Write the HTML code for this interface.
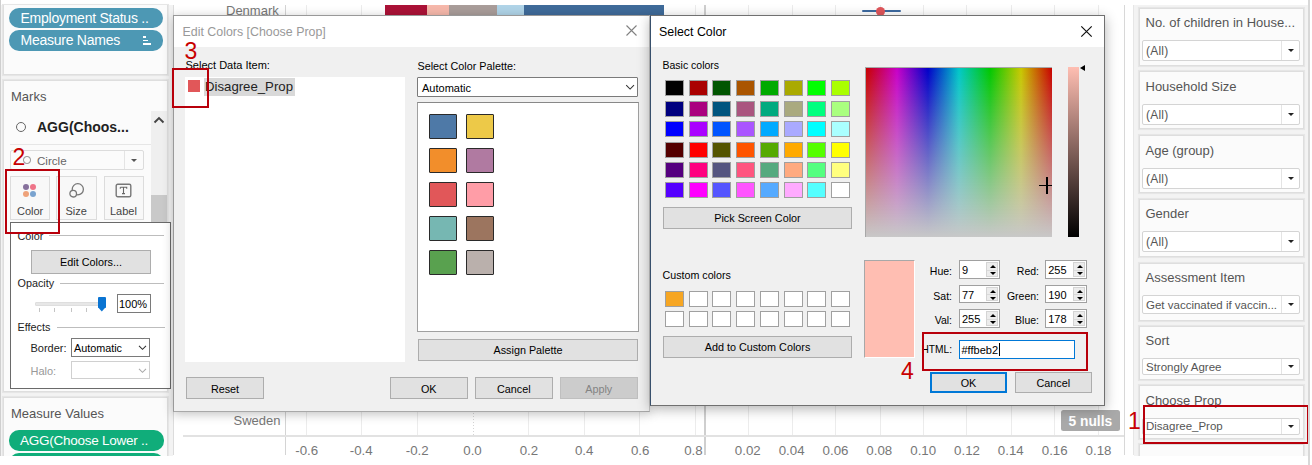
<!DOCTYPE html>
<html><head><meta charset="utf-8">
<style>
*{margin:0;padding:0;box-sizing:border-box}
html,body{width:1312px;height:465px;overflow:hidden;background:#fff;font-family:"Liberation Sans",sans-serif}
.a{position:absolute}
.t{position:absolute;white-space:pre;line-height:1}
.card{position:absolute;background:#fbfbfb;border:1px solid #dedede;box-shadow:0 0 0.6px 0.6px #e6e6e6}
.pill{position:absolute;border-radius:10px;color:#fff;font-size:14px;letter-spacing:-0.25px;white-space:pre}
.btn{position:absolute;background:#e1e1e1;border:1px solid #adadad;font-size:10.8px;color:#000;text-align:center;white-space:pre}
.sw{position:absolute;width:19px;height:16px;border:1px solid #a0a0a0}
.psw{position:absolute;width:28px;height:25px;border:1px solid #2a2a2a;border-radius:1px}
.fcard{position:absolute;left:1139px;width:165px;background:#fbfbfb;border:1px solid #dedede;box-shadow:0 0 0.6px 0.6px #e6e6e6}
.fdd{position:absolute;left:2px;width:158px;background:#fff;border:1px solid #d4d4d4;border-radius:2px}
.fdd .arr{position:absolute;right:0;top:0;bottom:0;width:18px;border-left:1px solid #e4e4e4}
.fdd .arr:after{content:"";position:absolute;left:5.5px;top:50%;margin-top:-1.5px;border-left:3px solid transparent;border-right:3px solid transparent;border-top:3.5px solid #222}
.ftitle{position:absolute;left:5.5px;font-size:13px;color:#555;white-space:pre;line-height:1}
.fval{position:absolute;left:3px;font-size:12px;color:#555;letter-spacing:0.2px;white-space:pre;line-height:1}
.spin{position:absolute;width:41px;height:18.5px;background:#fff;border:1px solid #a0a0a0}
.spin .sb{position:absolute;right:1px;top:1px;width:12px;height:14.5px;background:#ececec;border:1px solid #d4d4d4}
.lbl{position:absolute;font-size:10.5px;color:#000;white-space:pre;line-height:1;text-align:right}
.red{position:absolute;border:2px solid #b8000b}
.num{position:absolute;color:#c80000;font-size:23px;line-height:1;white-space:pre}
</style></head><body>

<!-- ============ LEFT PANEL ============ -->
<div class="a" style="left:0;top:5px;width:173px;height:451px;background:#f3f3f3"></div>
<div class="a" style="left:1134px;top:5px;width:174px;height:451px;background:#f3f3f3"></div>
<div class="a" style="left:0;top:0;width:1px;height:465px;background:#cfcfcf"></div>
<div class="card" style="left:3px;top:5px;width:165px;height:70px;border-top:none"></div>
<div class="pill" style="left:9px;top:7.8px;width:154.3px;height:20.2px;background:#4d98b4"><span class="t" style="left:11.5px;top:3px">Employment Status ..</span></div>
<div class="pill" style="left:9px;top:30.2px;width:154.3px;height:20.5px;background:#4d98b4"><span class="t" style="left:11.5px;top:3px">Measure Names</span>
 <div class="a" style="left:134px;top:6px;width:2.5px;height:1.6px;background:#fff"></div>
 <div class="a" style="left:134px;top:9.7px;width:5px;height:1.6px;background:#fff"></div>
 <div class="a" style="left:134px;top:12.9px;width:8.3px;height:1.7px;background:#fff"></div>
</div>

<!-- marks card -->
<div class="card" style="left:3px;top:80px;width:165px;height:312px"></div>
<div class="t" style="left:11px;top:90px;font-size:13px;color:#555">Marks</div>
<div class="a" style="left:15.5px;top:122px;width:10px;height:10px;border:1.3px solid #666;border-radius:50%"></div>
<div class="t" style="left:37px;top:120px;font-size:14px;font-weight:bold;color:#222">AGG(Choos...</div>
<div class="a" style="left:151px;top:111px;width:16px;height:277px;background:#efefef"></div>
<div class="a" style="left:151px;top:195px;width:16px;height:193px;background:#c9c9c9"></div>
<svg class="a" style="left:152px;top:115px" width="14" height="10"><path d="M2.5 7.5L7 3L11.5 7.5" fill="none" stroke="#444" stroke-width="1.9"/></svg>
<div class="a" style="left:10px;top:144px;width:141px;height:1px;background:#e6e6e6"></div>
<div class="a" style="left:10px;top:150px;width:134px;height:20px;background:#fbfbfb;border:1px solid #dcdcdc;border-radius:2px"></div>
<div class="a" style="left:124px;top:151px;width:1px;height:18px;background:#e4e4e4"></div>
<div class="a" style="left:131px;top:158.5px;border-left:3px solid transparent;border-right:3px solid transparent;border-top:3.5px solid #555"></div>
<div class="a" style="left:23px;top:156px;width:7.5px;height:7.5px;border:1px solid #888;border-radius:50%"></div>
<div class="t" style="left:37px;top:154.5px;font-size:11.6px;color:#666">Circle</div>

<div class="a" style="left:10.3px;top:176px;width:39.7px;height:44px;background:#f8f8f8;border:1px solid #dcdcdc"></div>
<div class="a" style="left:56.2px;top:176px;width:41.3px;height:44px;background:#f8f8f8;border:1px solid #dcdcdc"></div>
<div class="a" style="left:104px;top:176px;width:40px;height:44px;background:#f8f8f8;border:1px solid #dcdcdc"></div>
<div class="a" style="left:22.9px;top:183.8px;width:6px;height:6px;border-radius:50%;background:#86709c"></div>
<div class="a" style="left:30.3px;top:183.8px;width:6px;height:6px;border-radius:50%;background:#ee7488"></div>
<div class="a" style="left:22.9px;top:191px;width:6px;height:6px;border-radius:50%;background:#eea27a"></div>
<div class="a" style="left:30.3px;top:191px;width:6px;height:6px;border-radius:50%;background:#7aa3cf"></div>
<div class="t" style="left:17px;top:206px;font-size:11px;color:#444">Color</div>
<svg class="a" style="left:68px;top:181px" width="18" height="18"><circle cx="9.8" cy="8.3" r="5.6" fill="none" stroke="#777" stroke-width="1.3"/><circle cx="5.2" cy="12.7" r="3.3" fill="#f8f8f8" stroke="#777" stroke-width="1.3"/></svg>
<div class="t" style="left:65.5px;top:206px;font-size:11px;color:#444">Size</div>
<svg class="a" style="left:115px;top:183px" width="18" height="16"><rect x="1.2" y="1.2" width="14.6" height="12.6" rx="1.5" fill="none" stroke="#777" stroke-width="1.4"/><path d="M5.3 4.3H11.7V5.8M5.3 4.3V5.8M8.5 4.3V10.6M7 10.6H10" fill="none" stroke="#666" stroke-width="1.1"/></svg>
<div class="t" style="left:110px;top:206px;font-size:11px;color:#444">Label</div>

<!-- color popup -->
<div class="a" style="left:10px;top:222px;width:161px;height:167px;background:#fff;border:1px solid #6a6a6a"></div>
<div class="t" style="left:17.5px;top:231px;font-size:10.8px;color:#222">Color</div>
<div class="a" style="left:49px;top:235px;width:115px;height:1px;background:#bdbdbd"></div>
<div class="btn" style="left:31px;top:250px;width:120px;height:24px;padding-top:5px">Edit Colors...</div>
<div class="t" style="left:17.5px;top:278px;font-size:10.8px;color:#222">Opacity</div>
<div class="a" style="left:60px;top:283px;width:104px;height:1px;background:#bdbdbd"></div>
<div class="a" style="left:35px;top:302.3px;width:66px;height:3.5px;background:#e7e7e7;border:1px solid #dedede;border-radius:1px"></div>
<div class="a" style="left:39.2px;top:308.3px;width:1px;height:3.5px;background:#c4c4c4"></div>
<div class="a" style="left:54.3px;top:308.3px;width:1px;height:3.5px;background:#c4c4c4"></div>
<div class="a" style="left:70.5px;top:308.3px;width:1px;height:3.5px;background:#c4c4c4"></div>
<div class="a" style="left:86px;top:308.3px;width:1px;height:3.5px;background:#c4c4c4"></div>
<div class="a" style="left:97.8px;top:297.1px;width:8px;height:10.5px;background:#0a74d2;border-radius:1px"></div>
<div class="a" style="left:97.8px;top:307px;width:8px;height:4.5px;background:#0a74d2;clip-path:polygon(0 0,100% 0,50% 100%)"></div>
<div class="a" style="left:116.7px;top:294.2px;width:34px;height:18.4px;background:#fff;border:1px solid #7a7a7a"></div>
<div class="t" style="left:119px;top:298.5px;font-size:11px;color:#000">100%</div>
<div class="t" style="left:17.5px;top:322px;font-size:10.8px;color:#222">Effects</div>
<div class="a" style="left:56.5px;top:327px;width:108px;height:1px;background:#bdbdbd"></div>
<div class="t" style="left:30.5px;top:343px;font-size:11px;color:#222">Border:</div>
<div class="a" style="left:70.8px;top:338.2px;width:79.5px;height:18.4px;background:#fff;border:1px solid #7a7a7a"></div>
<div class="t" style="left:74px;top:343px;font-size:10.8px;color:#000">Automatic</div>
<svg class="a" style="left:138px;top:344px" width="10" height="8"><path d="M1 1.8L4.5 5.3L8 1.8" fill="none" stroke="#333" stroke-width="1.05"/></svg>
<div class="t" style="left:30.5px;top:365.5px;font-size:11px;color:#999">Halo:</div>
<div class="a" style="left:70.8px;top:361.2px;width:79.5px;height:18.2px;background:#fff;border:1px solid #d0d0d0"></div>
<svg class="a" style="left:138px;top:367px" width="10" height="8"><path d="M1 1.8L4.5 5.3L8 1.8" fill="none" stroke="#aaa" stroke-width="1.05"/></svg>

<!-- measure values card -->
<div class="card" style="left:3px;top:397px;width:165px;height:70px"></div>
<div class="t" style="left:11px;top:406.7px;font-size:13px;color:#555">Measure Values</div>
<div class="pill" style="left:9px;top:430.3px;width:154.5px;height:20.3px;background:#10ad7a"><span class="t" style="left:11px;top:3.6px;font-size:13.5px">AGG(Choose Lower ..</span></div>
<div class="pill" style="left:9px;top:453px;width:154.5px;height:20px;background:#10ad7a"></div>

<div class="red" style="left:5px;top:169px;width:55px;height:65px"></div>
<div class="num" style="left:12.5px;top:145.5px">2</div>

<!-- ============ CHART ============ -->
<div class="a" style="left:173px;top:5px;width:1px;height:450px;background:#dcdcdc"></div>
<div class="a" style="left:305.8px;top:5px;width:1px;height:431px;background:#ececec"></div>
<div class="a" style="left:361.0px;top:5px;width:1px;height:431px;background:#ececec"></div>
<div class="a" style="left:416.5px;top:5px;width:1px;height:431px;background:#ececec"></div>
<div class="a" style="left:527.5px;top:5px;width:1px;height:431px;background:#ececec"></div>
<div class="a" style="left:583.5px;top:5px;width:1px;height:431px;background:#ececec"></div>
<div class="a" style="left:639.0px;top:5px;width:1px;height:431px;background:#ececec"></div>
<div class="a" style="left:694.5px;top:5px;width:1px;height:431px;background:#ececec"></div>
<div class="a" style="left:748.1px;top:5px;width:1px;height:431px;background:#ececec"></div>
<div class="a" style="left:792.1px;top:5px;width:1px;height:431px;background:#ececec"></div>
<div class="a" style="left:835.1px;top:5px;width:1px;height:431px;background:#ececec"></div>
<div class="a" style="left:879.7px;top:5px;width:1px;height:431px;background:#ececec"></div>
<div class="a" style="left:923.0px;top:5px;width:1px;height:431px;background:#ececec"></div>
<div class="a" style="left:966.1px;top:5px;width:1px;height:431px;background:#ececec"></div>
<div class="a" style="left:1010.5px;top:5px;width:1px;height:431px;background:#ececec"></div>
<div class="a" style="left:1054.1px;top:5px;width:1px;height:431px;background:#ececec"></div>
<div class="a" style="left:1097.9px;top:5px;width:1px;height:431px;background:#ececec"></div>
<div class="a" style="left:472.5px;top:5px;width:1px;height:431px;background:repeating-linear-gradient(to bottom,#d4d4d4 0 1.5px,transparent 1.5px 3px)"></div>
<div class="t" style="left:266.7px;width:80px;text-align:center;top:444px;font-size:13.3px;color:#777">-0.6</div>
<div class="t" style="left:321.2px;width:80px;text-align:center;top:444px;font-size:13.3px;color:#777">-0.4</div>
<div class="t" style="left:377.2px;width:80px;text-align:center;top:444px;font-size:13.3px;color:#777">-0.2</div>
<div class="t" style="left:432.5px;width:80px;text-align:center;top:444px;font-size:13.3px;color:#777">0.0</div>
<div class="t" style="left:488.9px;width:80px;text-align:center;top:444px;font-size:13.3px;color:#777">0.2</div>
<div class="t" style="left:544.2px;width:80px;text-align:center;top:444px;font-size:13.3px;color:#777">0.4</div>
<div class="t" style="left:600.2px;width:80px;text-align:center;top:444px;font-size:13.3px;color:#777">0.6</div>
<div class="t" style="left:653.4px;width:80px;text-align:center;top:444px;font-size:13.3px;color:#777">0.8</div>
<div class="t" style="left:707.8px;width:80px;text-align:center;top:444px;font-size:13.3px;color:#777">0.02</div>
<div class="t" style="left:751.6px;width:80px;text-align:center;top:444px;font-size:13.3px;color:#777">0.04</div>
<div class="t" style="left:795.5px;width:80px;text-align:center;top:444px;font-size:13.3px;color:#777">0.06</div>
<div class="t" style="left:839.3px;width:80px;text-align:center;top:444px;font-size:13.3px;color:#777">0.08</div>
<div class="t" style="left:883.2px;width:80px;text-align:center;top:444px;font-size:13.3px;color:#777">0.10</div>
<div class="t" style="left:927.0px;width:80px;text-align:center;top:444px;font-size:13.3px;color:#777">0.12</div>
<div class="t" style="left:970.8px;width:80px;text-align:center;top:444px;font-size:13.3px;color:#777">0.14</div>
<div class="t" style="left:1014.7px;width:80px;text-align:center;top:444px;font-size:13.3px;color:#777">0.16</div>
<div class="t" style="left:1058.5px;width:80px;text-align:center;top:444px;font-size:13.3px;color:#777">0.18</div>
<div class="t" style="left:226px;top:3.5px;font-size:13px;color:#777">Denmark</div>
<div class="a" style="left:285px;top:5px;width:1px;height:450px;background:#d4d4d4"></div>
<div class="a" style="left:385px;top:5px;width:42px;height:10px;background:#ab1237"></div>
<div class="a" style="left:427px;top:5px;width:22px;height:10px;background:#f6b8ab"></div>
<div class="a" style="left:449px;top:5px;width:48px;height:10px;background:#a99d9a"></div>
<div class="a" style="left:497px;top:5px;width:26.5px;height:10px;background:#b0d4e8"></div>
<div class="a" style="left:523.5px;top:5px;width:140.5px;height:10px;background:#3f6b9a"></div>
<div class="a" style="left:861.5px;top:10px;width:39px;height:2.4px;border-radius:1.2px;background:#3d6aa0"></div>
<div class="a" style="left:876px;top:6.5px;width:9px;height:9px;border-radius:50%;background:#e0565b"></div>
<div class="a" style="left:704px;top:5px;width:1.5px;height:450px;background:#cfcfcf"></div>

<div class="t" style="left:233.5px;top:414px;font-size:13px;color:#777">Sweden</div>
<div class="a" style="left:183px;top:435.3px;width:941px;height:1.6px;background:#e2e2e2"></div>
<div class="a" style="left:1061px;top:410.3px;width:58.7px;height:20.7px;background:#a9a9a9;border-radius:2.5px"></div>
<div class="t" style="left:1068.5px;top:414.5px;font-size:13.8px;font-weight:bold;color:#fff">5 nulls</div>
<div class="a" style="left:1124px;top:5px;width:1px;height:450px;background:#d8d8d8"></div>
<div class="a" style="left:1133px;top:5px;width:1px;height:450px;background:#e6e6e6"></div>
<div class="a" style="left:0;top:455.5px;width:1312px;height:10px;background:#fff"></div>

<!-- ============ RIGHT FILTER CARDS ============ -->
<div class="fcard" style="top:7.5px;height:58px"><div class="ftitle" style="top:7.5px">No. of children in House...</div><div class="fdd" style="top:31.5px;height:21px"><div class="fval" style="top:4px">(All)</div><div class="arr"></div></div></div>
<div class="fcard" style="top:71.3px;height:58px"><div class="ftitle" style="top:7.5px">Household Size</div><div class="fdd" style="top:31.5px;height:21px"><div class="fval" style="top:4px">(All)</div><div class="arr"></div></div></div>
<div class="fcard" style="top:135.2px;height:58px"><div class="ftitle" style="top:7.5px">Age (group)</div><div class="fdd" style="top:31.5px;height:21px"><div class="fval" style="top:4px">(All)</div><div class="arr"></div></div></div>
<div class="fcard" style="top:198.6px;height:58px"><div class="ftitle" style="top:7.5px">Gender</div><div class="fdd" style="top:31.5px;height:21px"><div class="fval" style="top:4px">(All)</div><div class="arr"></div></div></div>
<div class="fcard" style="top:262.5px;height:58px"><div class="ftitle" style="top:7.5px">Assessment Item</div><div class="fdd" style="top:31.5px;height:19px"><div class="fval" style="top:3.5px;font-size:11.5px;letter-spacing:0">Get vaccinated if vaccin...</div><div class="arr"></div></div></div>
<div class="fcard" style="top:325.8px;height:54px"><div class="ftitle" style="top:7.5px">Sort</div><div class="fdd" style="top:31.5px;height:17px"><div class="fval" style="top:2.5px;font-size:11.5px;letter-spacing:0">Strongly Agree</div><div class="arr"></div></div></div>
<div class="fcard" style="top:385.3px;height:54px"><div class="ftitle" style="top:7.5px">Choose Prop</div><div class="fdd" style="top:31.5px;height:17px"><div class="fval" style="top:2.5px;font-size:11.5px;letter-spacing:0">Disagree_Prop</div><div class="arr"></div></div></div>
<div class="fcard" style="top:444.4px;height:30px"></div>
<div class="a" style="left:0;top:455.5px;width:1312px;height:10px;background:#fff"></div>
<div class="red" style="left:1143px;top:405.2px;width:166px;height:38.5px"></div>
<div class="a" style="left:1308px;top:0;width:1.5px;height:465px;background:#d8d8d8"></div>
<div class="num" style="left:1128px;top:409.5px">1</div>

<!-- ============ EDIT COLORS DIALOG ============ -->
<div class="a" style="left:173.4px;top:14.5px;width:476.6px;height:397.3px;background:#f0f0f0;border:1px solid #999;border-right-color:#c4c4c4;border-bottom-color:#a8a8a8;box-shadow:0 2px 10px rgba(0,0,0,0.25)">
 <div class="a" style="left:0;top:0;width:475px;height:31px;background:#fff"></div>
</div>
<div class="t" style="left:182.5px;top:25.5px;font-size:12.4px;color:#999">Edit Colors [Choose Prop]</div>
<svg class="a" style="left:625px;top:24px" width="13" height="13"><path d="M1.5 1.5L11.5 11.5M11.5 1.5L1.5 11.5" stroke="#808080" stroke-width="1.1"/></svg>
<div class="t" style="left:185.5px;top:60px;font-size:11px;color:#000">Select Data Item:</div>
<div class="a" style="left:185px;top:77px;width:220px;height:284.5px;background:#fff"></div>
<div class="a" style="left:204px;top:77.5px;width:91px;height:18px;background:#d9d9d9"></div>
<div class="a" style="left:188px;top:80px;width:12px;height:11.5px;background:#e15759"></div>
<div class="t" style="left:205px;top:79.5px;font-size:13.2px;color:#222">Disagree_Prop</div>
<div class="t" style="left:417.5px;top:60.5px;font-size:10.8px;color:#000">Select Color Palette:</div>
<div class="a" style="left:417px;top:77px;width:221px;height:19.5px;background:#fff;border:1px solid #7a7a7a;border-radius:1px"></div>
<div class="t" style="left:422px;top:83px;font-size:11px;color:#000">Automatic</div>
<svg class="a" style="left:625px;top:83.5px" width="10" height="7"><path d="M1.2 1.2L5.1 5.1L9 1.2" fill="none" stroke="#333" stroke-width="1.05"/></svg>
<div class="a" style="left:417px;top:101.5px;width:221.5px;height:230px;background:#fff;border:1px solid #a0a0a0;border-top-color:#888"></div>
<div class="psw" style="left:429px;top:114px;background:#4e79a7"></div>
<div class="psw" style="left:466px;top:114px;background:#edc948"></div>
<div class="psw" style="left:429px;top:148px;background:#f28e2b"></div>
<div class="psw" style="left:466px;top:148px;background:#b07aa1"></div>
<div class="psw" style="left:429px;top:182px;background:#e15759"></div>
<div class="psw" style="left:466px;top:182px;background:#ff9da7"></div>
<div class="psw" style="left:429px;top:216px;background:#76b7b2"></div>
<div class="psw" style="left:466px;top:216px;background:#9c755f"></div>
<div class="psw" style="left:429px;top:250px;background:#59a14f"></div>
<div class="psw" style="left:466px;top:250px;background:#bab0ac"></div>
<div class="btn" style="left:418px;top:339px;width:220px;height:21.5px;padding-top:4px">Assign Palette</div>
<div class="btn" style="left:186px;top:377px;width:78px;height:21.5px;padding-top:4.5px">Reset</div>
<div class="btn" style="left:390px;top:377px;width:77.5px;height:21.5px;padding-top:4.5px">OK</div>
<div class="btn" style="left:475px;top:377px;width:77.5px;height:21.5px;padding-top:4.5px">Cancel</div>
<div class="btn" style="left:560px;top:377px;width:77.5px;height:21.5px;padding-top:4.5px;background:#cccccc;border-color:#bfbfbf;color:#838383">Apply</div>
<div class="red" style="left:172px;top:68px;width:37px;height:39.5px"></div>
<div class="num" style="left:184.5px;top:39.5px">3</div>

<!-- ============ SELECT COLOR DIALOG ============ -->
<div class="a" style="left:650px;top:15px;width:455px;height:390.5px;background:#f0f0f0;border:1px solid #707070;border-left-color:#38506c;box-shadow:0 3px 12px rgba(0,0,0,0.3)">
 <div class="a" style="left:0;top:0;width:453px;height:31px;background:#fff"></div>
</div>
<div class="t" style="left:659px;top:25.5px;font-size:12.4px;color:#000">Select Color</div>
<svg class="a" style="left:1080px;top:25px" width="13" height="13"><path d="M1.3 1.3L11.7 11.7M11.7 1.3L1.3 11.7" stroke="#111" stroke-width="1.2"/></svg>
<div class="t" style="left:662.5px;top:60px;font-size:10.5px;color:#000">Basic colors</div>
<div class="sw" style="left:664.7px;top:80.4px;background:rgb(0, 0, 0)"></div>
<div class="sw" style="left:688.5px;top:80.4px;background:rgb(170, 0, 0)"></div>
<div class="sw" style="left:712.2px;top:80.4px;background:rgb(0, 85, 0)"></div>
<div class="sw" style="left:736.0px;top:80.4px;background:rgb(170, 85, 0)"></div>
<div class="sw" style="left:759.7px;top:80.4px;background:rgb(0, 170, 0)"></div>
<div class="sw" style="left:783.5px;top:80.4px;background:rgb(170, 170, 0)"></div>
<div class="sw" style="left:807.3px;top:80.4px;background:rgb(0, 255, 0)"></div>
<div class="sw" style="left:831.0px;top:80.4px;background:rgb(170, 255, 0)"></div>
<div class="sw" style="left:664.7px;top:100.8px;background:rgb(0, 0, 127)"></div>
<div class="sw" style="left:688.5px;top:100.8px;background:rgb(170, 0, 127)"></div>
<div class="sw" style="left:712.2px;top:100.8px;background:rgb(0, 85, 127)"></div>
<div class="sw" style="left:736.0px;top:100.8px;background:rgb(170, 85, 127)"></div>
<div class="sw" style="left:759.7px;top:100.8px;background:rgb(0, 170, 127)"></div>
<div class="sw" style="left:783.5px;top:100.8px;background:rgb(170, 170, 127)"></div>
<div class="sw" style="left:807.3px;top:100.8px;background:rgb(0, 255, 127)"></div>
<div class="sw" style="left:831.0px;top:100.8px;background:rgb(170, 255, 127)"></div>
<div class="sw" style="left:664.7px;top:121.2px;background:rgb(0, 0, 255)"></div>
<div class="sw" style="left:688.5px;top:121.2px;background:rgb(170, 0, 255)"></div>
<div class="sw" style="left:712.2px;top:121.2px;background:rgb(0, 85, 255)"></div>
<div class="sw" style="left:736.0px;top:121.2px;background:rgb(170, 85, 255)"></div>
<div class="sw" style="left:759.7px;top:121.2px;background:rgb(0, 170, 255)"></div>
<div class="sw" style="left:783.5px;top:121.2px;background:rgb(170, 170, 255)"></div>
<div class="sw" style="left:807.3px;top:121.2px;background:rgb(0, 255, 255)"></div>
<div class="sw" style="left:831.0px;top:121.2px;background:rgb(170, 255, 255)"></div>
<div class="sw" style="left:664.7px;top:141.6px;background:rgb(85, 0, 0)"></div>
<div class="sw" style="left:688.5px;top:141.6px;background:rgb(255, 0, 0)"></div>
<div class="sw" style="left:712.2px;top:141.6px;background:rgb(85, 85, 0)"></div>
<div class="sw" style="left:736.0px;top:141.6px;background:rgb(255, 85, 0)"></div>
<div class="sw" style="left:759.7px;top:141.6px;background:rgb(85, 170, 0)"></div>
<div class="sw" style="left:783.5px;top:141.6px;background:rgb(255, 170, 0)"></div>
<div class="sw" style="left:807.3px;top:141.6px;background:rgb(85, 255, 0)"></div>
<div class="sw" style="left:831.0px;top:141.6px;background:rgb(255, 255, 0)"></div>
<div class="sw" style="left:664.7px;top:162.0px;background:rgb(85, 0, 127)"></div>
<div class="sw" style="left:688.5px;top:162.0px;background:rgb(255, 0, 127)"></div>
<div class="sw" style="left:712.2px;top:162.0px;background:rgb(85, 85, 127)"></div>
<div class="sw" style="left:736.0px;top:162.0px;background:rgb(255, 85, 127)"></div>
<div class="sw" style="left:759.7px;top:162.0px;background:rgb(85, 170, 127)"></div>
<div class="sw" style="left:783.5px;top:162.0px;background:rgb(255, 170, 127)"></div>
<div class="sw" style="left:807.3px;top:162.0px;background:rgb(85, 255, 127)"></div>
<div class="sw" style="left:831.0px;top:162.0px;background:rgb(255, 255, 127)"></div>
<div class="sw" style="left:664.7px;top:182.4px;background:rgb(85, 0, 255)"></div>
<div class="sw" style="left:688.5px;top:182.4px;background:rgb(255, 0, 255)"></div>
<div class="sw" style="left:712.2px;top:182.4px;background:rgb(85, 85, 255)"></div>
<div class="sw" style="left:736.0px;top:182.4px;background:rgb(255, 85, 255)"></div>
<div class="sw" style="left:759.7px;top:182.4px;background:rgb(85, 170, 255)"></div>
<div class="sw" style="left:783.5px;top:182.4px;background:rgb(255, 170, 255)"></div>
<div class="sw" style="left:807.3px;top:182.4px;background:rgb(85, 255, 255)"></div>
<div class="sw" style="left:831.0px;top:182.4px;background:rgb(255, 255, 255)"></div>
<div class="btn" style="left:663.3px;top:207px;width:188.3px;height:21.5px;padding-top:4.2px">Pick Screen Color</div>
<div class="t" style="left:662.5px;top:270px;font-size:10.7px;color:#000">Custom colors</div>
<div class="sw" style="left:664.7px;top:291.2px;background:#f6a623"></div>
<div class="sw" style="left:688.5px;top:291.2px;background:#fff"></div>
<div class="sw" style="left:712.2px;top:291.2px;background:#fff"></div>
<div class="sw" style="left:736.0px;top:291.2px;background:#fff"></div>
<div class="sw" style="left:759.7px;top:291.2px;background:#fff"></div>
<div class="sw" style="left:783.5px;top:291.2px;background:#fff"></div>
<div class="sw" style="left:807.3px;top:291.2px;background:#fff"></div>
<div class="sw" style="left:831.0px;top:291.2px;background:#fff"></div>
<div class="sw" style="left:664.7px;top:311.3px;background:#fff"></div>
<div class="sw" style="left:688.5px;top:311.3px;background:#fff"></div>
<div class="sw" style="left:712.2px;top:311.3px;background:#fff"></div>
<div class="sw" style="left:736.0px;top:311.3px;background:#fff"></div>
<div class="sw" style="left:759.7px;top:311.3px;background:#fff"></div>
<div class="sw" style="left:783.5px;top:311.3px;background:#fff"></div>
<div class="sw" style="left:807.3px;top:311.3px;background:#fff"></div>
<div class="sw" style="left:831.0px;top:311.3px;background:#fff"></div>
<div class="btn" style="left:663px;top:335.8px;width:189px;height:21.8px;padding-top:4.5px">Add to Custom Colors</div>
<div class="a" style="left:864.5px;top:67.2px;width:187.5px;height:170px;border-left:1px solid #a8a8a8;border-top:1px solid #a8a8a8;background:linear-gradient(to bottom,rgba(200,200,200,0),rgb(200,200,200)),linear-gradient(to right,rgb(200,0,0),rgb(200,0,200),rgb(0,0,200),rgb(0,200,200),rgb(0,200,0),rgb(200,200,0),rgb(200,0,0))"></div>
<div class="a" style="left:1038.7px;top:184.7px;width:13.3px;height:1.7px;background:#000"></div>
<div class="a" style="left:1046.3px;top:177px;width:1.7px;height:17px;background:#000"></div>
<div class="a" style="left:1067.7px;top:67.2px;width:11.5px;height:170px;background:linear-gradient(to bottom,#ffbeb2,#000)"></div>
<div class="a" style="left:1080px;top:65px;border-top:3.5px solid transparent;border-bottom:3.5px solid transparent;border-right:5px solid #000"></div>
<div class="a" style="left:864px;top:260px;width:51px;height:97.5px;background:#ffbeb2;border:1px solid #fff;border-left-color:#a8a8a8;border-top-color:#a8a8a8"></div>
<div class="lbl" style="left:900px;width:52px;top:266px">Hue:</div>
<div class="lbl" style="left:900px;width:52px;top:290.5px">Sat:</div>
<div class="lbl" style="left:900px;width:52px;top:315px">Val:</div>
<div class="lbl" style="left:980px;width:59px;top:266px">Red:</div>
<div class="lbl" style="left:980px;width:59px;top:290.5px">Green:</div>
<div class="lbl" style="left:980px;width:59px;top:315px">Blue:</div>
<div class="lbl" style="left:900px;width:52px;top:345px;font-size:10.2px">HTML:</div>
<div class="spin" style="left:959px;top:260.3px;width:41px"><div class="sb"><div class="a" style="left:0;right:0;top:6.5px;height:1px;background:#dadada"></div></div><div class="a" style="right:3.3px;top:4px;border-left:3.7px solid transparent;border-right:3.7px solid transparent;border-bottom:3.6px solid #000"></div><div class="a" style="right:3.3px;top:10.8px;border-left:3.7px solid transparent;border-right:3.7px solid transparent;border-top:3.6px solid #000"></div><div class="t" style="left:2px;top:4px;font-size:11px;color:#000">9</div></div>
<div class="spin" style="left:1045.2px;top:260.3px;width:41.7px"><div class="sb"><div class="a" style="left:0;right:0;top:6.5px;height:1px;background:#dadada"></div></div><div class="a" style="right:3.3px;top:4px;border-left:3.7px solid transparent;border-right:3.7px solid transparent;border-bottom:3.6px solid #000"></div><div class="a" style="right:3.3px;top:10.8px;border-left:3.7px solid transparent;border-right:3.7px solid transparent;border-top:3.6px solid #000"></div><div class="t" style="left:2px;top:4px;font-size:11px;color:#000">255</div></div>
<div class="spin" style="left:959px;top:284.8px;width:41px"><div class="sb"><div class="a" style="left:0;right:0;top:6.5px;height:1px;background:#dadada"></div></div><div class="a" style="right:3.3px;top:4px;border-left:3.7px solid transparent;border-right:3.7px solid transparent;border-bottom:3.6px solid #000"></div><div class="a" style="right:3.3px;top:10.8px;border-left:3.7px solid transparent;border-right:3.7px solid transparent;border-top:3.6px solid #000"></div><div class="t" style="left:2px;top:4px;font-size:11px;color:#000">77</div></div>
<div class="spin" style="left:1045.2px;top:284.8px;width:41.7px"><div class="sb"><div class="a" style="left:0;right:0;top:6.5px;height:1px;background:#dadada"></div></div><div class="a" style="right:3.3px;top:4px;border-left:3.7px solid transparent;border-right:3.7px solid transparent;border-bottom:3.6px solid #000"></div><div class="a" style="right:3.3px;top:10.8px;border-left:3.7px solid transparent;border-right:3.7px solid transparent;border-top:3.6px solid #000"></div><div class="t" style="left:2px;top:4px;font-size:11px;color:#000">190</div></div>
<div class="spin" style="left:959px;top:309.3px;width:41px"><div class="sb"><div class="a" style="left:0;right:0;top:6.5px;height:1px;background:#dadada"></div></div><div class="a" style="right:3.3px;top:4px;border-left:3.7px solid transparent;border-right:3.7px solid transparent;border-bottom:3.6px solid #000"></div><div class="a" style="right:3.3px;top:10.8px;border-left:3.7px solid transparent;border-right:3.7px solid transparent;border-top:3.6px solid #000"></div><div class="t" style="left:2px;top:4px;font-size:11px;color:#000">255</div></div>
<div class="spin" style="left:1045.2px;top:309.3px;width:41.7px"><div class="sb"><div class="a" style="left:0;right:0;top:6.5px;height:1px;background:#dadada"></div></div><div class="a" style="right:3.3px;top:4px;border-left:3.7px solid transparent;border-right:3.7px solid transparent;border-bottom:3.6px solid #000"></div><div class="a" style="right:3.3px;top:10.8px;border-left:3.7px solid transparent;border-right:3.7px solid transparent;border-top:3.6px solid #000"></div><div class="t" style="left:2px;top:4px;font-size:11px;color:#000">178</div></div>
<div class="a" style="left:959px;top:340px;width:116px;height:18.5px;background:#fff;border:1px solid #0078d7"></div>
<div class="t" style="left:961.5px;top:344.5px;font-size:11px;color:#000">#ffbeb2</div>
<div class="a" style="left:999px;top:342.5px;width:1px;height:13px;background:#000"></div>
<div class="btn" style="left:930px;top:371.5px;width:77px;height:21px;padding-top:3.5px;border:2px solid #0078d7">OK</div>
<div class="btn" style="left:1014.5px;top:371.5px;width:77.5px;height:21px;padding-top:4px">Cancel</div>
<div class="red" style="left:922px;top:332px;width:166px;height:38.5px"></div>
<div class="num" style="left:901px;top:360px">4</div>

</body></html>
